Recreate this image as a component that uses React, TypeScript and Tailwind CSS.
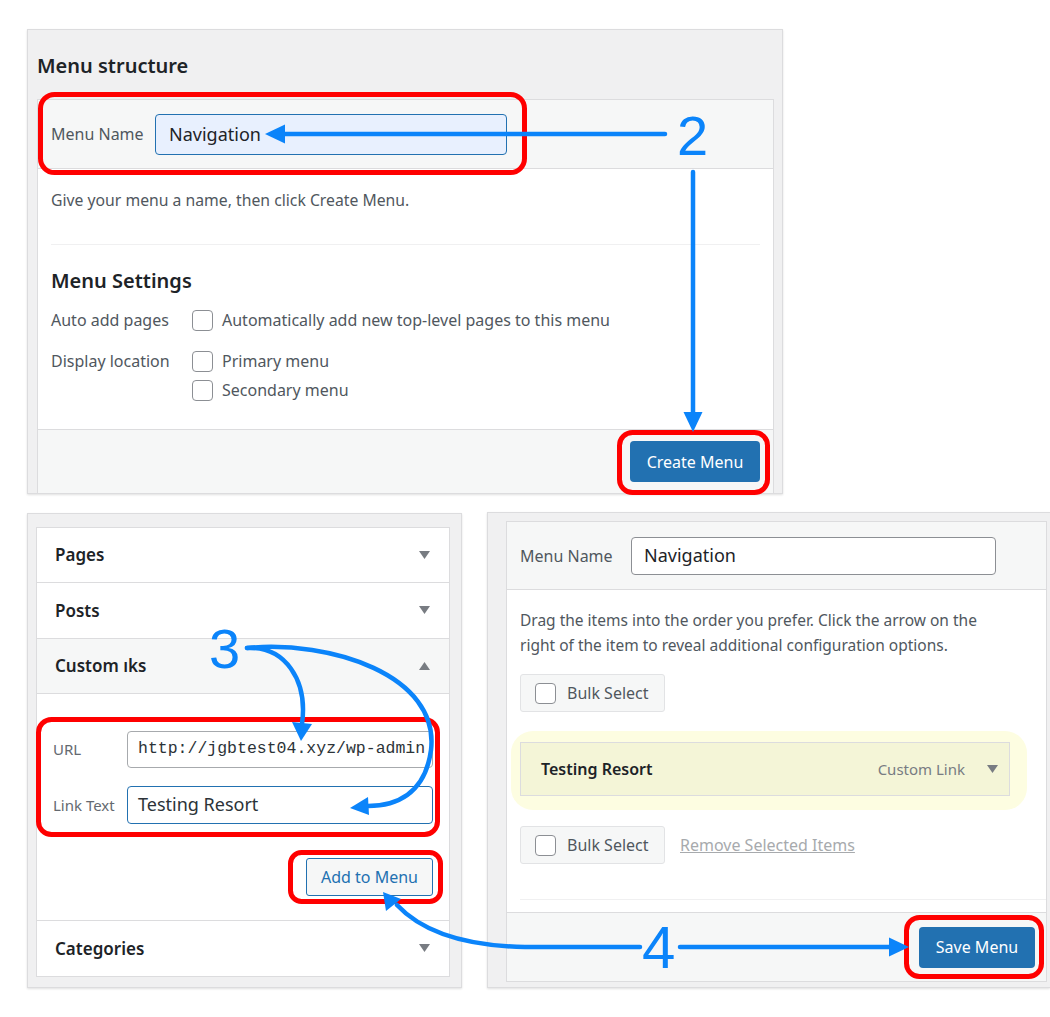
import React from "react";

const Caret = ({ up = false }: { up?: boolean }) => (
  <svg width="11" height="8" viewBox="0 0 11 8" className="shrink-0">
    <polygon points={up ? "0,8 11,8 5.5,0" : "0,0 11,0 5.5,8"} fill="#787c82" />
  </svg>
);

const Checkbox = () => (
  <span className="block w-[21px] h-[21px] shrink-0 rounded-[4px] border border-[#8c8f94] bg-white" />
);

const BulkSelect = () => (
  <div className="flex items-center w-[145px] h-[38px] pl-[14px] gap-[11px] rounded-[3px] border border-[#e2e3e5] bg-[#f6f7f7] text-[16px] text-[#50575e]">
    <Checkbox />
    <span>Bulk Select</span>
  </div>
);

const AccordionRow = ({ title, open = false }: { title: string; open?: boolean }) => (
  <div
    className={`flex items-center justify-between h-[56px] pl-[18px] pr-[19px] border-b border-[#dcdcde] ${
      open ? "bg-[#f6f7f7]" : "bg-white"
    }`}
  >
    <span className="text-[17px] font-semibold text-[#1d2327]">{title}</span>
    <Caret up={open} />
  </div>
);

const Annotations = () => {
  const blue = "#0b84fa";
  return (
    <svg className="absolute inset-0 pointer-events-none" width="1050" height="1017" viewBox="0 0 1050 1017">
      <g fill="none" stroke="#ff0000" strokeWidth="5">
        <rect x="40.5" y="94.5" width="484" height="78" rx="14" />
        <rect x="619.5" y="432.5" width="148" height="60" rx="13" />
        <rect x="38.5" y="719.5" width="399" height="115" rx="13" />
        <rect x="290.5" y="852.5" width="150" height="49" rx="11" />
        <rect x="906.5" y="917.5" width="135" height="59" rx="13" />
      </g>
      <g fill="none" stroke={blue} strokeWidth="4.5" strokeLinecap="round">
        <line x1="665" y1="134" x2="282" y2="134" />
        <line x1="693" y1="172" x2="693" y2="414" />
        <path d="M247,648 C285,646 308,680 302,724" />
        <path d="M247,648 C330,640 440,675 431,750 C425,795 395,806 368,806" />
        <path d="M640,947 L525,947 C470,946 425,935 397,905" />
        <line x1="680" y1="947" x2="890" y2="947" />
      </g>
      <g fill={blue}>
        <polygon points="265,134 285,124.5 285,143.5" />
        <polygon points="683.5,412 702.5,412 693,432" />
        <polygon points="292,722 312,724 301,741" />
        <polygon points="350,808 368,797 369,815" />
        <polygon points="383,892 386,911 401,899" />
        <polygon points="909,947 889,937.5 889,956.5" />
      </g>
      <g fill={blue} style={{ fontFamily: '"Liberation Sans", Arial, sans-serif' }}>
        <text x="677" y="155" fontSize="56">2</text>
        <text x="209" y="668" fontSize="56">3</text>
        <text x="642" y="968" fontSize="60">4</text>
      </g>
    </svg>
  );
};

export default function App() {
  return (
    <div
      className="relative w-[1050px] h-[1017px] overflow-hidden bg-white text-[#1d2327]"
      style={{ fontFamily: '"Noto Sans", "Open Sans", sans-serif' }}
    >
      {/* Menu structure panel */}
      <div className="ml-[27px] mt-[29px] w-[756px] h-[465px] flex flex-col border border-[#dcdcde] bg-[#f0f0f1] pl-[9px] pr-[8px] shadow-[0_1px_2px_rgba(0,0,0,0.12)]">
        <div className="h-[69px] shrink-0 flex items-center pt-[3px]">
          <h2 className="text-[20px] font-semibold">Menu structure</h2>
        </div>
        <div className="flex-1 flex flex-col border border-b-0 border-[#dcdcde] bg-white">
          <div className="h-[69px] shrink-0 flex items-center pl-[13px] bg-[#f6f7f7] border-b border-[#dcdcde]">
            <span className="w-[104px] text-[16px] text-[#50575e]">Menu Name</span>
            <div className="w-[352px] h-[41px] flex items-center px-[13px] rounded-[4px] border border-[#2271b1] bg-[#e8f0fe] text-[18px]">
              Navigation
            </div>
          </div>
          <div className="px-[13px]">
            <p className="mt-[19px] text-[15.75px] leading-[24px] text-[#50575e]">
              Give your menu a name, then click Create Menu.
            </p>
            <div className="mt-[32px] h-px bg-[#f0f0f1]" />
            <h3 className="mt-[22px] text-[20px] leading-[28px] font-semibold">Menu Settings</h3>
            <div className="mt-[15px] grid grid-cols-[141px_1fr] gap-y-[20px] text-[16px] text-[#50575e]">
              <span className="leading-[21px]">Auto add pages</span>
              <label className="flex items-center gap-[9px] leading-[21px]">
                <Checkbox />
                Automatically add new top-level pages to this menu
              </label>
              <span className="leading-[21px]">Display location</span>
              <div className="flex flex-col gap-[8px]">
                <label className="flex items-center gap-[9px] leading-[21px]">
                  <Checkbox />
                  Primary menu
                </label>
                <label className="flex items-center gap-[9px] leading-[21px]">
                  <Checkbox />
                  Secondary menu
                </label>
              </div>
            </div>
          </div>
          <div className="mt-auto h-[64px] flex items-center justify-end pr-[13px] bg-[#f6f7f7] border-t border-[#dcdcde]">
            <button className="w-[130px] h-[41px] rounded-[4px] bg-[#2271b1] text-white text-[16px]">Create Menu</button>
          </div>
        </div>
      </div>

      <div className="flex items-start mt-[19px]">
        {/* Add menu items panel */}
        <div className="ml-[27px] w-[435px] h-[475px] border border-[#dcdcde] bg-[#f0f0f1] pt-[13px] pb-[10px] pl-[8px] pr-[11px] shadow-[0_1px_2px_rgba(0,0,0,0.12)]">
          <div className="h-full border border-[#dcdcde] bg-white flex flex-col">
            <AccordionRow title="Pages" />
            <AccordionRow title="Posts" />
            <AccordionRow title="Custom ıks" open />
            <div className="pt-[37px] pl-[16px] pr-[16px] pb-[24px] border-b border-[#dcdcde]">
              <div className="flex items-center">
                <span className="w-[74px] text-[15px] text-[#646970]">URL</span>
                <div className="w-[306px] h-[37px] flex items-center pl-[10px] rounded-[4px] border border-[#a7aaad] overflow-hidden whitespace-nowrap text-[16.5px] text-[#2c3338]" style={{ fontFamily: '"Liberation Mono", monospace' }}>
                  http://jgbtest04.xyz/wp-admin
                </div>
              </div>
              <div className="flex items-center mt-[18px]">
                <span className="w-[74px] text-[15px] text-[#646970]">Link Text</span>
                <div className="w-[306px] h-[38px] flex items-center pl-[10px] rounded-[4px] border border-[#2271b1] text-[18px] text-[#2c3338]">
                  Testing Resort
                </div>
              </div>
              <div className="flex justify-end mt-[34px]">
                <button className="w-[127px] h-[38px] rounded-[3px] border border-[#2271b1] bg-[#f6f7f7] text-[16px] text-[#2271b1]">Add to Menu</button>
              </div>
            </div>
            <div className="flex items-center justify-between h-[56px] pl-[18px] pr-[19px]">
              <span className="text-[17px] font-semibold text-[#1d2327]">Categories</span>
              <Caret />
            </div>
          </div>
        </div>

        {/* Menu edit panel */}
        <div className="ml-[25px] -mt-px w-[570px] h-[476px] border border-r-0 border-[#dcdcde] bg-[#f0f0f1] pt-[8px] pb-[5px] pl-[18px] shadow-[0_1px_2px_rgba(0,0,0,0.12)]">
          <div className="w-[541px] h-full border border-[#dcdcde] bg-white flex flex-col">
            <div className="h-[68px] shrink-0 flex items-center pl-[13px] bg-[#f6f7f7] border-b border-[#dcdcde]">
              <span className="w-[111px] text-[16px] text-[#50575e]">Menu Name</span>
              <div className="w-[365px] h-[38px] flex items-center px-[12px] rounded-[4px] border border-[#8c8f94] bg-white text-[18px]">
                Navigation
              </div>
            </div>
            <div className="pl-[13px]">
              <p className="mt-[18px] text-[15.5px] leading-[25px] text-[#50575e]">
                Drag the items into the order you prefer. Click the arrow on the
                <br />
                right of the item to reveal additional configuration options.
              </p>
              <div className="mt-[16px]">
                <BulkSelect />
              </div>
              <div className="mt-[19px] -ml-[9px] w-[516px] pl-[9px] pr-[17px] pt-[11px] pb-[14px] rounded-[22px] bg-[#fdfde1]">
                <div className="h-[54px] flex items-center justify-between pl-[20px] pr-[11px] border border-[#dcdcde] bg-[#f4f5d7]">
                  <span className="text-[16px] font-semibold">Testing Resort</span>
                  <div className="flex items-center gap-[22px]">
                    <span className="text-[15px] text-[#787c82]">Custom Link</span>
                    <Caret />
                  </div>
                </div>
              </div>
              <div className="mt-[16px] flex items-center gap-[15px]">
                <BulkSelect />
                <span className="text-[16px] text-[#a7aaad] underline">Remove Selected Items</span>
              </div>
              <div className="mt-[35px] h-px bg-[#f0f0f1]" />
            </div>
            <div className="mt-auto h-[69px] flex items-center pl-[412px] bg-[#f6f7f7] border-t border-[#dcdcde]">
              <button className="w-[116px] h-[41px] rounded-[4px] bg-[#2271b1] text-white text-[16px]">Save Menu</button>
            </div>
          </div>
        </div>
      </div>

      <Annotations />
    </div>
  );
}
